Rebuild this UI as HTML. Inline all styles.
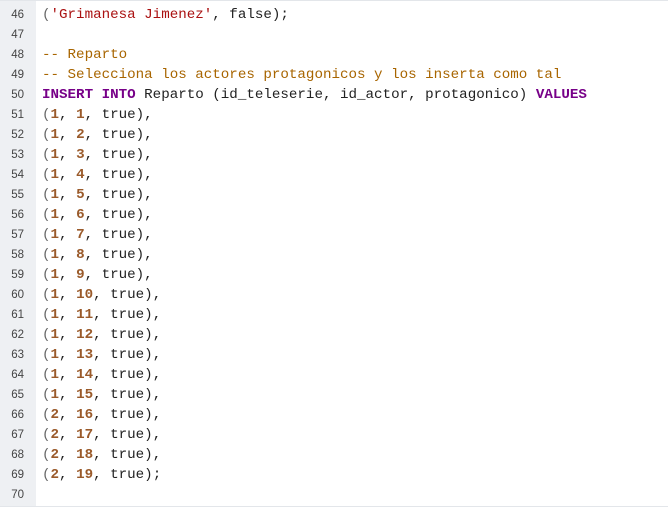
<!DOCTYPE html>
<html><head><style>
html,body{margin:0;padding:0;width:668px;height:509px;overflow:hidden;background:#fff}
.wrap{position:absolute;left:0;top:0;width:668px;height:507px;border-top:1px solid #e3e6ea;border-bottom:1px solid #e3e6ea;box-sizing:border-box;overflow:hidden}
.gut{position:absolute;left:0;top:0;width:36px;height:100%;background:#eef0f3}
.lines{position:absolute;left:0;top:-16px;font-family:"Liberation Mono",monospace;font-size:14.2px;line-height:20px}
.l{height:20px;white-space:pre;position:relative}
.n{position:absolute;left:0;width:24px;text-align:right;font-size:11.5px;color:#444;font-family:"Liberation Sans",sans-serif}
.c{position:absolute;left:42px;color:#222}
.k{color:#770088;font-weight:bold}.s{color:#aa1111}.m{color:#a86500}.d{color:#9a5a2a;font-weight:bold}.p{color:#666}
</style></head><body><div class="wrap"><div class="gut"></div><div class="lines">
<div class="l"><span class="n">45</span><span class="c"></span></div>
<div class="l"><span class="n">46</span><span class="c"><span class="p">(</span><span class="s">'Grimanesa Jimenez'</span>, false);</span></div>
<div class="l"><span class="n">47</span><span class="c"></span></div>
<div class="l"><span class="n">48</span><span class="c"><span class="m">-- Reparto</span></span></div>
<div class="l"><span class="n">49</span><span class="c"><span class="m">-- Selecciona los actores protagonicos y los inserta como tal</span></span></div>
<div class="l"><span class="n">50</span><span class="c"><span class="k">INSERT INTO</span> Reparto (id_teleserie, id_actor, protagonico) <span class="k">VALUES</span></span></div>
<div class="l"><span class="n">51</span><span class="c"><span class="p">(</span><span class="d">1</span>, <span class="d">1</span>, true),</span></div>
<div class="l"><span class="n">52</span><span class="c"><span class="p">(</span><span class="d">1</span>, <span class="d">2</span>, true),</span></div>
<div class="l"><span class="n">53</span><span class="c"><span class="p">(</span><span class="d">1</span>, <span class="d">3</span>, true),</span></div>
<div class="l"><span class="n">54</span><span class="c"><span class="p">(</span><span class="d">1</span>, <span class="d">4</span>, true),</span></div>
<div class="l"><span class="n">55</span><span class="c"><span class="p">(</span><span class="d">1</span>, <span class="d">5</span>, true),</span></div>
<div class="l"><span class="n">56</span><span class="c"><span class="p">(</span><span class="d">1</span>, <span class="d">6</span>, true),</span></div>
<div class="l"><span class="n">57</span><span class="c"><span class="p">(</span><span class="d">1</span>, <span class="d">7</span>, true),</span></div>
<div class="l"><span class="n">58</span><span class="c"><span class="p">(</span><span class="d">1</span>, <span class="d">8</span>, true),</span></div>
<div class="l"><span class="n">59</span><span class="c"><span class="p">(</span><span class="d">1</span>, <span class="d">9</span>, true),</span></div>
<div class="l"><span class="n">60</span><span class="c"><span class="p">(</span><span class="d">1</span>, <span class="d">10</span>, true),</span></div>
<div class="l"><span class="n">61</span><span class="c"><span class="p">(</span><span class="d">1</span>, <span class="d">11</span>, true),</span></div>
<div class="l"><span class="n">62</span><span class="c"><span class="p">(</span><span class="d">1</span>, <span class="d">12</span>, true),</span></div>
<div class="l"><span class="n">63</span><span class="c"><span class="p">(</span><span class="d">1</span>, <span class="d">13</span>, true),</span></div>
<div class="l"><span class="n">64</span><span class="c"><span class="p">(</span><span class="d">1</span>, <span class="d">14</span>, true),</span></div>
<div class="l"><span class="n">65</span><span class="c"><span class="p">(</span><span class="d">1</span>, <span class="d">15</span>, true),</span></div>
<div class="l"><span class="n">66</span><span class="c"><span class="p">(</span><span class="d">2</span>, <span class="d">16</span>, true),</span></div>
<div class="l"><span class="n">67</span><span class="c"><span class="p">(</span><span class="d">2</span>, <span class="d">17</span>, true),</span></div>
<div class="l"><span class="n">68</span><span class="c"><span class="p">(</span><span class="d">2</span>, <span class="d">18</span>, true),</span></div>
<div class="l"><span class="n">69</span><span class="c"><span class="p">(</span><span class="d">2</span>, <span class="d">19</span>, true);</span></div>
<div class="l"><span class="n">70</span><span class="c"></span></div>
</div></div></body></html>
